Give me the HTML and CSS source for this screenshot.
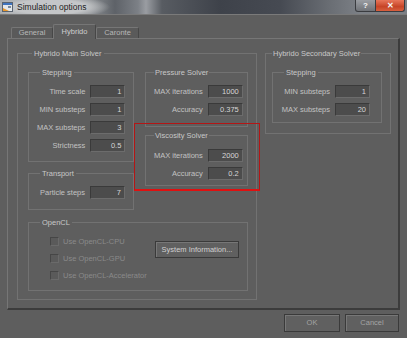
FILE: index.html
```html
<!DOCTYPE html>
<html lang="en">
<head>
  <meta charset="UTF-8" />
  <title>Simulation options</title>
  <link rel="stylesheet" href="styles.css">
</head>
<body>

<div class="titlebar">
  <svg class="app-icon" width="11" height="10" viewBox="0 0 11 10">
    <rect x="0.5" y="0.5" width="10" height="9" fill="#e4e8ec" stroke="#5a6470"/>
    <rect x="1" y="1" width="9" height="2" fill="#3f74c0"/>
    <polygon points="1,6 7,9 1,9" fill="#e8962a"/>
    <rect x="6" y="4" width="3" height="2" fill="#7a8898"/>
  </svg>
  <span class="title">Simulation options</span>
  <div class="caption-buttons">
    <div class="cap-btn help">?</div>
    <div class="cap-btn close">✕</div>
  </div>
</div>

<div class="dialog">
  <div class="tabs">
    <div class="tab">General</div>
    <div class="tab active">Hybrido</div>
    <div class="tab">Caronte</div>
  </div>

  <div class="pane">
    <div class="group main-solver">
      <div class="group-title t-main">Hybrido Main Solver</div>
      <div class="solver-cols">
        <div class="left-col">
          <div class="group stepping">
            <div class="group-title">Stepping</div>
            <div class="fields">
              <span class="label">Time scale</span><div class="field">1</div>
              <span class="label">MIN substeps</span><div class="field">1</div>
              <span class="label">MAX substeps</span><div class="field">3</div>
              <span class="label">Strictness</span><div class="field">0.5</div>
            </div>
          </div>
          <div class="group transport">
            <div class="group-title">Transport</div>
            <div class="fields">
              <span class="label">Particle steps</span><div class="field">7</div>
            </div>
          </div>
        </div>
        <div class="right-col">
          <div class="group pressure">
            <div class="group-title t-tight">Pressure Solver</div>
            <div class="fields">
              <span class="label">MAX iterations</span><div class="field">1000</div>
              <span class="label">Accuracy</span><div class="field">0.375</div>
            </div>
          </div>
          <div class="group viscosity">
            <div class="group-title t-tight">Viscosity Solver</div>
            <div class="fields">
              <span class="label">MAX iterations</span><div class="field">2000</div>
              <span class="label">Accuracy</span><div class="field">0.2</div>
            </div>
          </div>
        </div>
      </div>

      <div class="group opencl">
        <div class="group-title">OpenCL</div>
        <div class="opencl-body">
          <div class="checks">
            <div class="check"><span class="check-box"></span>Use OpenCL-CPU</div>
            <div class="check"><span class="check-box"></span>Use OpenCL-GPU</div>
            <div class="check"><span class="check-box"></span>Use OpenCL-Accelerator</div>
          </div>
          <div class="btn sysinfo">System Information...</div>
        </div>
      </div>
    </div>

    <div class="group secondary">
      <div class="group-title t-tight">Hybrido Secondary Solver</div>
      <div class="group stepping2">
        <div class="group-title">Stepping</div>
        <div class="fields">
          <span class="label">MIN substeps</span><div class="field">1</div>
          <span class="label">MAX substeps</span><div class="field">20</div>
        </div>
      </div>
    </div>
  </div>

  <div class="buttons">
    <div class="btn ok">OK</div>
    <div class="btn cancel">Cancel</div>
  </div>
</div>

<!-- red highlight drawn over the viscosity group -->
<div class="highlight"></div>

</body>
</html>
```

FILE: styles.css
```css
* {
  box-sizing: border-box;
}

body {
  margin: 0;
  width: 407px;
  height: 338px;
  overflow: hidden;
  position: relative;
  background: #5e5e5e;
  font-family: 'Liberation Sans', Arial, sans-serif;
  font-size: 7.5px;
  color: #c2c2c2;
}

/* window caption */
.titlebar {
  height: 15px;
  display: flex;
  align-items: center;
  border-bottom: 1px solid #7a7a7a;
  background:
    radial-gradient(ellipse 60px 12px at 50px 7px, #c4c6c8 60%, rgba(196,198,200,0) 100%),
    linear-gradient(90deg, #a6a9ac 0, #8a8e92 90px, #5e6268 115px, #7c8086 138px, #9a9da2 146px, #585c62 162px, #3e424a 220px, #464a52 280px, #6a6e74 330px, #7c8086 360px);
}

.app-icon {
  margin-left: 2px;
}

.title {
  margin-left: 4px;
  font-size: 8.5px;
  color: #1c1c1c;
}

.caption-buttons {
  display: flex;
  align-self: flex-start;
  margin-left: auto;
  margin-right: 2px;
}

.cap-btn {
  height: 12px;
  border: 1px solid #3a3c40;
  border-top: none;
  text-align: center;
  line-height: 11px;
  color: #f4f4f4;
  font-weight: bold;
}

.cap-btn.help {
  width: 21px;
  border-radius: 0 0 0 3px;
  background: linear-gradient(#9a9da2, #707378);
  font-size: 8px;
}

.cap-btn.close {
  width: 29px;
  border-left: none;
  border-radius: 0 0 3px 0;
  background: linear-gradient(#e8765a, #c64426 60%, #d8603e);
  font-size: 8px;
}

/* tabs */
.dialog {
  padding-top: 9px;
}

.tabs {
  display: flex;
  align-items: flex-end;
  height: 14px;
  margin-left: 11px;
}

.tab {
  width: 43px;
  height: 11px;
  border: 1px solid #767676;
  border-bottom: none;
  border-right-color: #474747;
  border-radius: 2px 2px 0 0;
  background: #5a5a5a;
  text-align: center;
  line-height: 10px;
  color: #b8b8b8;
}

.tab:first-child {
  width: 42px;
}

.tab.active {
  position: relative;
  z-index: 1;
  height: 15px;
  margin-bottom: -1px;
  background: #5e5e5e;
  line-height: 13px;
  color: #cfcfcf;
}

.pane {
  display: flex;
  align-items: flex-start;
  gap: 8px;
  width: 393px;
  height: 272px;
  margin-left: 7px;
  padding: 14px 0 0 9px;
  border: 1px solid #767676;
  border-right: 2px solid #3c3c3c;
  border-bottom: 2px solid #3c3c3c;
}

/* group boxes */
.group {
  border: 1px solid #727272;
  padding: 0 8px 9px;
}

.group-title {
  width: fit-content;
  height: 9px;
  margin: -5px 0 0 3px;
  padding: 0 2px;
  line-height: 9px;
  background: #5e5e5e;
  color: #c8c8c8;
}

.group-title.t-main { margin-left: 4px; padding: 0 2px; }
.group-title.t-tight { margin-left: 0; padding: 0 1px; }

.main-solver {
  width: 240px;
  padding: 0 8px 8px 10px;
}

.solver-cols {
  display: flex;
  gap: 11px;
  margin-top: 14px;
}

.left-col {
  display: flex;
  flex-direction: column;
  gap: 11px;
  width: 106px;
}

.right-col {
  display: flex;
  flex-direction: column;
  gap: 8px;
  width: 103px;
}

.pressure { padding-bottom: 10px; }
.viscosity { padding-bottom: 5px; }
.viscosity .fields { margin-top: 9px; }
.transport { padding-bottom: 10px; }

.fields {
  display: grid;
  grid-template-columns: 1fr 35px;
  column-gap: 5px;
  row-gap: 5px;
  margin-top: 8px;
}

.pressure .fields,
.viscosity .fields {
  padding-right: 1px;
}

.label {
  text-align: right;
  line-height: 13px;
  white-space: nowrap;
}

.field {
  height: 13px;
  padding-right: 3px;
  border: 1px solid #3a3a3a;
  border-right-color: #6c6c6c;
  border-bottom-color: #6c6c6c;
  background: #4c4c4c;
  text-align: right;
  line-height: 11px;
  color: #d6d6d6;
}

.secondary {
  width: 126px;
  padding: 0 8px 10px 6px;
}

.stepping2 {
  margin-top: 14px;
  padding: 0 11px 6px 8px;
}

/* opencl */
.opencl {
  width: 220px;
  margin-top: 12px;
  padding-bottom: 6px;
}

.opencl-body {
  display: flex;
  align-items: flex-start;
  margin-top: 6px;
  padding-left: 13px;
}

.checks {
  width: 105px;
}

.check {
  display: flex;
  align-items: center;
  height: 17px;
  color: #8a8a8a;
  white-space: nowrap;
}

.check-box {
  width: 9px;
  height: 9px;
  margin-right: 4px;
  border: 1px solid #464646;
  border-right-color: #6a6a6a;
  border-bottom-color: #6a6a6a;
  background: #5a5a5a;
}

.btn {
  border: 1px solid #3a3a3a;
  box-shadow: inset 1px 1px 0 #777;
  background: #606060;
  text-align: center;
}

.sysinfo {
  width: 84px;
  height: 17px;
  margin-top: 8px;
  line-height: 15px;
  color: #d0d0d0;
  white-space: nowrap;
}

.buttons {
  display: flex;
  justify-content: flex-end;
  gap: 5px;
  margin-top: 4px;
  padding-right: 8px;
}

.buttons .btn {
  height: 18px;
  line-height: 16px;
  color: #a4a4a4;
}

.ok { width: 56px; }
.cancel { width: 54px; }

.highlight {
  position: absolute;
  left: 134px;
  top: 123px;
  width: 126px;
  height: 68px;
  border: 1px solid #b41616;
  border-bottom: 2px solid #e01010;
}
```
